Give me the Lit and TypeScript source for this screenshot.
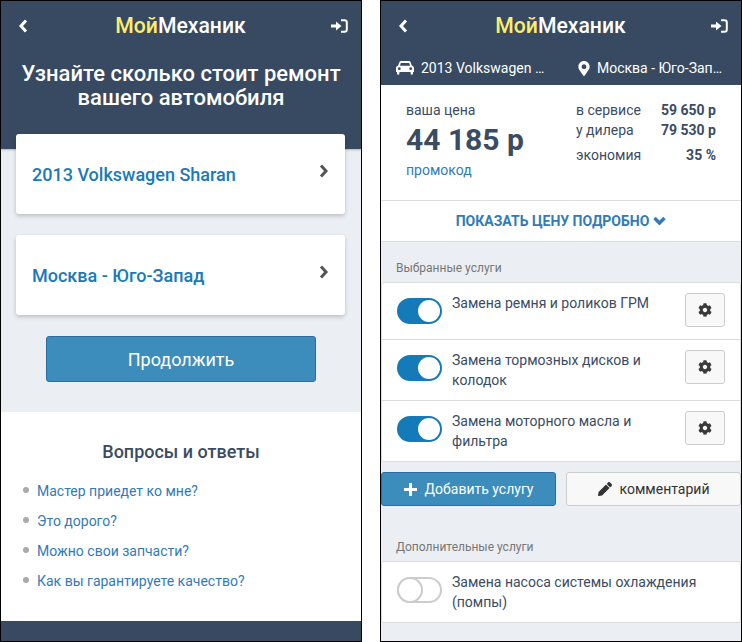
import { LitElement, css, html, svg } from "lit";
import { customElement } from "lit/decorators.js";

const cog = svg`<path d="M487.4 315.7l-42.6-24.6c4.3-23.2 4.3-47 0-70.2l42.6-24.6c4.9-2.8 7.1-8.6 5.5-14-11.1-35.6-30-67.8-54.7-94.6-3.8-4.1-10-5.1-14.8-2.3L380.8 110c-17.9-15.4-38.5-27.3-60.8-35.1V25.8c0-5.6-3.9-10.5-9.4-11.7-36.7-8.2-74.3-7.8-109.2 0-5.5 1.2-9.4 6.1-9.4 11.7V75c-22.2 7.9-42.8 19.8-60.8 35.1L88.7 85.5c-4.9-2.8-11-1.9-14.8 2.3-24.7 26.7-43.6 58.9-54.7 94.6-1.7 5.4.6 11.2 5.5 14L67.3 221c-4.3 23.2-4.3 47 0 70.2l-42.6 24.6c-4.9 2.8-7.1 8.6-5.5 14 11.1 35.6 30 67.8 54.7 94.6 3.8 4.1 10 5.1 14.8 2.3l42.6-24.6c17.9 15.4 38.5 27.3 60.8 35.1v49.2c0 5.6 3.9 10.5 9.4 11.7 36.7 8.2 74.3 7.8 109.2 0 5.5-1.2 9.4-6.1 9.4-11.7v-49.2c22.2-7.9 42.8-19.8 60.8-35.1l42.6 24.6c4.9 2.8 11 1.9 14.8-2.3 24.7-26.7 43.6-58.9 54.7-94.6 1.5-5.5-.7-11.3-5.6-14.1zM256 336c-44.1 0-80-35.9-80-80s35.9-80 80-80 80 35.9 80 80-35.9 80-80 80z"/>`;

@customElement("app-nav")
export class AppNav extends LitElement {
  render() {
    return html`
      <div class="nav">
        <svg class="back" width="10" height="14" viewBox="0 0 10 14">
          <path d="M8 1.5 3 7l5 5.5" fill="none" stroke="#fff" stroke-width="3" />
        </svg>
        <div class="logo"><span>Мой</span>Механик</div>
        <svg class="exit" width="17" height="14" viewBox="0 0 17 14">
          <path d="M0 5.5h5V2.500L10.500 7 5 11.500v-3H0z" fill="#fff" />
          <path d="M10 1.200h3.500a2.300 2.300 0 0 1 2.300 2.300v7a2.300 2.300 0 0 1-2.300 2.300H10" fill="none" stroke="#fff" stroke-width="2" />
        </svg>
      </div>
    `;
  }

  static styles = css`
    .nav {
      height: 49px;
      padding: 0 16px 0 15px;
      display: grid;
      grid-template-columns: 1fr auto 1fr;
      align-items: center;
      font-family: Roboto, sans-serif;
    }
    .logo {
      font-size: 21.2px;
      font-weight: 500;
      color: #fff;
    }
    .logo span {
      color: #ffeb6e;
    }
    .back {
      margin-left: 2px;
    }
    .exit {
      justify-self: end;
      margin-right: -3px;
    }
  `;
}

@customElement("app-service")
export class AppService extends LitElement {
  static properties = {
    name: { type: String },
    on: { type: Boolean },
    settings: { type: Boolean },
  };
  name = "";
  on = false;
  settings = false;

  render() {
    return html`
      <div class="row">
        <div class="toggle ${this.on ? "on" : ""}"><div class="knob"></div></div>
        <div class="name">${this.name}</div>
        ${this.settings
          ? html`<div class="gear">
              <svg width="14" height="14" viewBox="0 0 512 512" fill="#3a3a3a">${cog}</svg>
            </div>`
          : ""}
      </div>
    `;
  }

  static styles = css`
    :host {
      display: block;
    }
    .row {
      display: flex;
      align-items: flex-start;
      padding: 10px 15px;
      min-height: 36px;
    }
    .toggle {
      width: 45px;
      height: 26px;
      box-sizing: border-box;
      margin-top: 5px;
      border-radius: 13px;
      border: 2px solid #ccc;
      background: #fff;
      display: flex;
      flex-shrink: 0;
    }
    .toggle.on {
      background: #157ab8;
      border-color: #157ab8;
      justify-content: flex-end;
    }
    .knob {
      width: 26px;
      height: 26px;
      margin: -2px;
      border-radius: 50%;
      background: #fff;
      box-sizing: border-box;
      border: 2px solid #ccc;
    }
    .on .knob {
      width: 22px;
      height: 22px;
      margin: 0;
      border: none;
    }
    .name {
      flex: 1;
      margin-left: 10px;
      font-size: 14px;
      line-height: 20px;
      color: #3a4c63;
    }
    .gear {
      width: 40px;
      height: 34px;
      box-sizing: border-box;
      margin-left: 10px;
      background: #f8f8f8;
      border: 1px solid #ccc;
      border-radius: 3px;
      display: flex;
      align-items: center;
      justify-content: center;
      flex-shrink: 0;
    }
  `;
}

@customElement("app-root")
export class AppRoot extends LitElement {
  render() {
    return html`
      <section class="phone">
        <div class="dark hero">
          <app-nav></app-nav>
          <h1>Узнайте сколько стоит ремонт вашего автомобиля</h1>
        </div>
        <div class="choices">
          <div class="choice">
            <span>2013 Volkswagen Sharan</span>
            <svg width="10" height="14" viewBox="0 0 10 14"><path d="M2 1.500 7 7l-5 5.500" fill="none" stroke="#555" stroke-width="3" /></svg>
          </div>
          <div class="choice">
            <span>Москва - Юго-Запад</span>
            <svg width="10" height="14" viewBox="0 0 10 14"><path d="M2 1.500 7 7l-5 5.500" fill="none" stroke="#555" stroke-width="3" /></svg>
          </div>
          <div class="continue">Продолжить</div>
        </div>
        <div class="faq">
          <h2>Вопросы и ответы</h2>
          <ul>
            <li>Мастер приедет ко мне?</li>
            <li>Это дорого?</li>
            <li>Можно свои запчасти?</li>
            <li>Как вы гарантируете качество?</li>
          </ul>
        </div>
        <div class="dark foot"></div>
      </section>

      <section class="phone">
        <div class="dark">
          <app-nav></app-nav>
          <div class="crumbs">
            <div class="crumb car">
              <svg width="18" height="14" viewBox="0 0 18 14" fill="#fff">
                <path fill-rule="evenodd" d="M3.200 1.600C3.500.6 4.300 0 5.300 0h7.400c1 0 1.800.6 2.100 1.600l1 3C17.100 5 18 6 18 7.200V11h-1v1.500a1.200 1.200 0 0 1-2.400 0V11H3.400v1.500a1.200 1.200 0 0 1-2.400 0V11H0V7.200C0 6 .9 5 2.200 4.600zM4.800 2 4 4.700h10L13.200 2zM3.300 6.300a1.400 1.400 0 1 0 0 2.800 1.400 1.400 0 0 0 0-2.800zm11.400 0a1.400 1.400 0 1 0 0 2.800 1.400 1.400 0 0 0 0-2.800z" />
              </svg>
              <span>2013 Volkswagen Sharan</span>
            </div>
            <div class="crumb place">
              <svg width="12" height="15" viewBox="0 0 384 512" fill="#fff">
                <path d="M172.268 501.67C26.97 291.031 0 269.413 0 192 0 85.961 85.961 0 192 0s192 85.961 192 192c0 77.413-26.97 99.031-172.268 309.67-9.535 13.774-29.93 13.773-39.464 0zM192 272c44.183 0 80-35.817 80-80s-35.817-80-80-80-80 35.817-80 80 35.817 80 80 80z" />
              </svg>
              <span>Москва - Юго-Запад</span>
            </div>
          </div>
        </div>
        <div class="price">
          <div class="yours">
            <div class="caption">ваша цена</div>
            <div class="big">44 185 р</div>
            <div class="promo">промокод</div>
          </div>
          <div class="compare">
            <span>в сервисе</span><b>59 650 р</b>
            <span>у дилера</span><b>79 530 р</b>
            <span class="save">экономия</span><b class="save">35 %</b>
          </div>
        </div>
        <div class="details">
          ПОКАЗАТЬ ЦЕНУ ПОДРОБНО
          <svg width="13" height="10" viewBox="0 0 13 10"><path d="M1.500 2 6.500 7l5-5" fill="none" stroke="#337ab7" stroke-width="3.400" /></svg>
        </div>
        <div class="services">
          <div class="label first">Выбранные услуги</div>
          <div class="list">
            <app-service name="Замена ремня и роликов ГРМ" on settings></app-service>
            <app-service name="Замена тормозных дисков и колодок" on settings></app-service>
            <app-service name="Замена моторного масла и фильтра" on settings></app-service>
          </div>
          <div class="actions">
            <div class="btn add">
              <svg width="13" height="13" viewBox="0 0 13 13"><path d="M5 0h3v5h5v3H8v5H5V8H0V5h5z" fill="#fff" /></svg>
              Добавить услугу
            </div>
            <div class="btn note">
              <svg width="14" height="14" viewBox="0 0 512 512" fill="#333">
                <path d="M497.900 142.100l-46.100 46.100c-4.700 4.700-12.300 4.700-17 0l-111-111c-4.700-4.700-4.700-12.300 0-17l46.100-46.100c18.700-18.700 49.100-18.700 67.900 0l60.100 60.100c18.800 18.700 18.800 49.100 0 67.900zM284.200 99.800L21.600 362.400.4 483.900c-2.900 16.400 11.400 30.600 27.800 27.800l121.500-21.300 262.600-262.600c4.700-4.700 4.700-12.300 0-17l-111-111c-4.800-4.700-12.400-4.700-17.100 0z" />
              </svg>
              комментарий
            </div>
          </div>
          <div class="label extra">Дополнительные услуги</div>
          <div class="list">
            <app-service name="Замена насоса системы охлаждения (помпы)"></app-service>
          </div>
        </div>
      </section>
    `;
  }

  static styles = css`
    :host {
      display: flex;
      gap: 18px;
      width: 742px;
      height: 642px;
      background: #fff;
      font-family: Roboto, sans-serif;
    }
    * {
      box-sizing: border-box;
    }
    .phone {
      width: 362px;
      height: 642px;
      border: 1px solid #000;
      background: #ebeef3;
      display: flex;
      flex-direction: column;
      overflow: hidden;
    }
    .dark {
      background: #374a61;
    }
    .hero {
      height: 148px;
      flex-shrink: 0;
      box-shadow: 0 1px 2px rgba(0, 0, 0, 0.25);
    }
    h1 {
      margin: 0;
      padding: 12px 16px 0;
      font-size: 22px;
      font-weight: 500;
      line-height: 24px;
      text-align: center;
      color: #fff;
    }
    .choices {
      position: relative;
      height: 278px;
      flex-shrink: 0;
      margin-top: -15px;
      padding: 0 16px 0 15px;
      display: flex;
      flex-direction: column;
    }
    .choice {
      height: 80px;
      margin-bottom: 21px;
      padding: 0 16px;
      background: #fff;
      border-radius: 3px;
      box-shadow: 0 2px 4px rgba(0, 0, 0, 0.2);
      display: flex;
      align-items: center;
      justify-content: space-between;
      font-size: 18px;
      font-weight: 500;
      color: #1a7ab8;
    }
    .choice svg {
      margin-top: -6px;
    }
    .continue {
      width: 270px;
      height: 46px;
      margin-left: 30px;
      background: #3c8dbc;
      border: 1px solid #2d6ca2;
      border-radius: 3px;
      display: flex;
      align-items: center;
      justify-content: center;
      font-size: 18px;
      color: #fff;
    }
    .faq {
      flex: 1;
      background: #fff;
      padding-top: 29px;
    }
    h2 {
      margin: 0;
      font-size: 18px;
      font-weight: 500;
      line-height: 22px;
      text-align: center;
      color: #3a4c63;
    }
    ul {
      list-style: none;
      margin: 13px 0 0;
      padding: 0 0 0 22px;
    }
    li {
      height: 30px;
      display: flex;
      align-items: center;
      font-size: 14px;
      color: #337ab7;
    }
    li::before {
      content: "";
      width: 6px;
      height: 6px;
      margin-right: 8px;
      margin-top: -2px;
      border-radius: 50%;
      background: #aaa;
    }
    .foot {
      height: 20px;
      flex-shrink: 0;
    }
    .crumbs {
      height: 35px;
      padding: 8px 18px 0 15px;
      display: flex;
      align-items: flex-start;
      color: #fff;
      font-size: 14px;
    }
    .crumb {
      display: flex;
      align-items: center;
      gap: 7px;
      height: 20px;
      min-width: 0;
    }
    .crumb svg {
      flex-shrink: 0;
    }
    .crumb span {
      overflow: hidden;
      white-space: nowrap;
      text-overflow: ellipsis;
    }
    .car {
      width: 182px;
      flex-shrink: 0;
      padding-right: 31px;
    }
    .place {
      flex: 1;
    }
    .price {
      height: 116px;
      flex-shrink: 0;
      background: #fff;
      border-bottom: 1px solid #ddd;
      padding: 15px 25px 0 25px;
      display: flex;
      justify-content: space-between;
      color: #3a4c63;
      font-size: 14px;
    }
    .caption {
      line-height: 20px;
    }
    .big {
      margin-top: 1px;
      font-size: 30px;
      font-weight: 700;
      line-height: 38px;
    }
    .promo {
      margin-top: 1px;
      line-height: 20px;
      color: #337ab7;
    }
    .compare {
      width: 140px;
      display: grid;
      grid-template-columns: 1fr auto;
      grid-auto-rows: 20px;
      line-height: 20px;
    }
    .compare b {
      font-weight: 700;
      text-align: right;
    }
    .compare .save {
      margin-top: 5px;
    }
    .details {
      height: 41px;
      flex-shrink: 0;
      background: #fff;
      border-bottom: 1px solid #ddd;
      display: flex;
      align-items: center;
      justify-content: center;
      gap: 4px;
      font-size: 14px;
      font-weight: 700;
      color: #337ab7;
    }
    .label {
      padding-left: 15px;
      font-size: 12px;
      line-height: 16px;
      color: #777;
    }
    .label.first {
      padding-top: 18px;
      padding-bottom: 6px;
    }
    .label.extra {
      padding-top: 33px;
      padding-bottom: 6px;
    }
    .list {
      background: #fff;
      border: 1px solid #ddd;
      border-radius: 3px;
    }
    .list app-service + app-service {
      border-top: 1px solid #ddd;
    }
    .actions {
      display: flex;
      gap: 10px;
      margin-top: 10px;
    }
    .btn {
      height: 34px;
      width: 175px;
      border-radius: 3px;
      display: flex;
      align-items: center;
      justify-content: center;
      gap: 8px;
      font-size: 14px;
    }
    .add {
      background: #3c8dbc;
      border: 1px solid #2d6ca2;
      color: #fff;
    }
    .note {
      background: #f8f8f8;
      border: 1px solid #ccc;
      color: #333;
    }
  `;
}
